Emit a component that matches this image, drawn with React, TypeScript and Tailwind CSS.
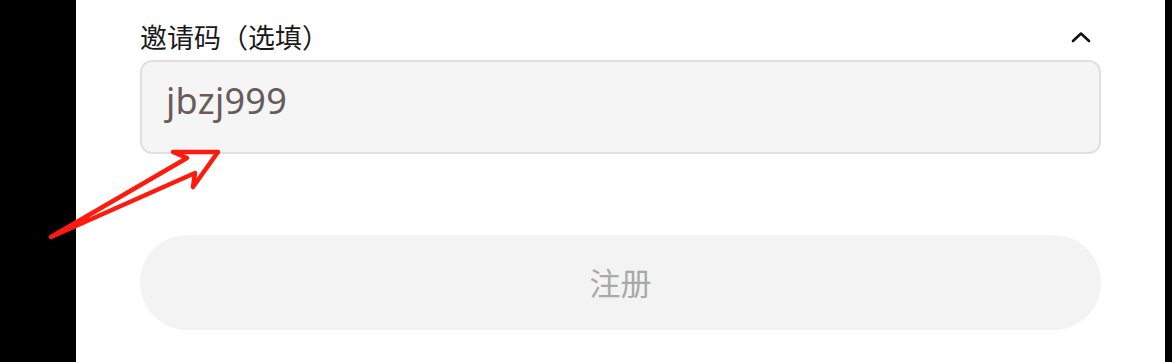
import React from "react";

const font = { fontFamily: '"Noto Sans", "Noto Sans CJK SC", sans-serif' };

function ChevronUp() {
  return (
    <svg width="20" height="12" viewBox="0 0 20 12" fill="none" className="mr-[10px]">
      <path d="M2 10 L10 2.5 L18 10" stroke="#111" strokeWidth="2.6" strokeLinecap="round" strokeLinejoin="round" />
    </svg>
  );
}

function Arrow() {
  return (
    <svg className="absolute left-0 top-0 pointer-events-none" width="1172" height="362" viewBox="0 0 1172 362">
      <polygon
        points="51,237 187,158 173,152 218,152 193,187 195,173"
        fill="none"
        stroke="#ff1a0e"
        strokeWidth="4.5"
        strokeLinejoin="round"
        strokeLinecap="round"
      />
    </svg>
  );
}

export default function App() {
  return (
    <div className="relative flex w-[1172px] h-[362px] bg-black overflow-hidden" style={font}>
      <div className="ml-[76px] w-[1089px] h-full bg-white px-[64px] pt-[20px] font-['Noto_Sans','Noto_Sans_CJK_SC',sans-serif]">
        <div className="flex items-center justify-between h-[34px]">
          <span className="text-[27px] leading-[34px] text-[#1a1a1a] font-['Noto_Sans_CJK_SC',sans-serif]">邀请码（选填）</span>
          <ChevronUp />
        </div>
        <div className="mt-[6px] h-[94px] flex items-center rounded-[12px] border-2 border-[#e0e0e0] bg-[#f5f5f5] pl-[24px] pb-[12px]">
          <span className="text-[36px] leading-[40px] text-[#675c5a] tracking-[0.3px]">jbzj999</span>
        </div>
        <button className="mt-[81px] w-full h-[95px] rounded-full bg-[#f3f3f3] flex items-center justify-center">
          <span className="text-[31px] text-[#a9a9a9] font-['Noto_Sans_CJK_SC',sans-serif]">注册</span>
        </button>
      </div>
      <Arrow />
    </div>
  );
}
